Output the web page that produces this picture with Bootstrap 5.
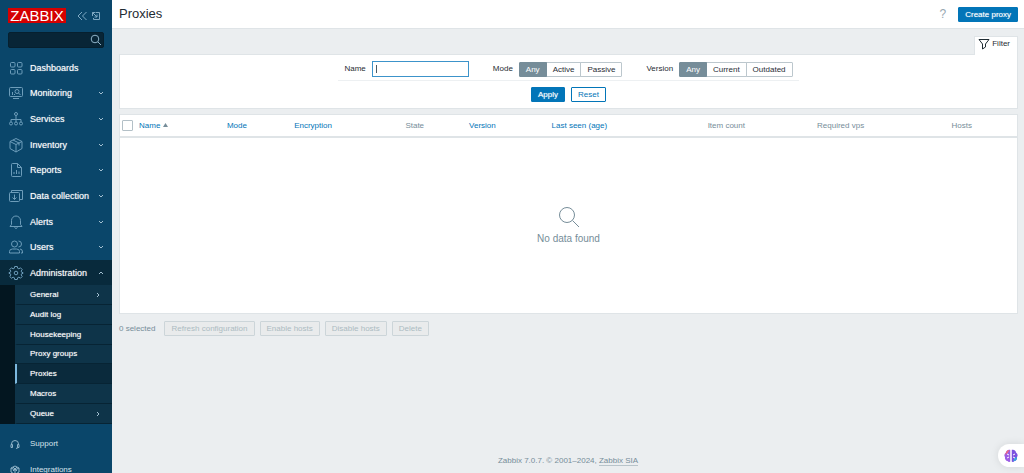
<!DOCTYPE html>
<html lang="en">
<head>
<meta charset="utf-8">
<meta name="viewport" content="width=device-width, initial-scale=1">
<title>Proxies</title>
<link href="https://cdn.jsdelivr.net/npm/bootstrap@5.3.0/dist/css/bootstrap.min.css" rel="stylesheet">
<style>
:root { --side: #0a466a; --blue: #0275b8; --ink: #1f2c33; --grey: #768d99; --line: #dfe4e7; }
body { font: 8px/12px "Liberation Sans", Arial, sans-serif; color: var(--ink); background: #ebeef0; }
svg { fill: none; stroke: currentColor; flex: none; }
a { text-decoration: none; color: inherit; }

.sidebar { width: 112px; background: var(--side); color: #7fa9c3; top: 0; }
.brand { height: 31px; padding: 0 11px 0 8px; }
.logo { background: #d40000; color: #fff; font-size: 15px; line-height: 15px; width: 58px; }
.side-search { margin: 1px 8px 0; height: 16px; }
.side-search input { background: #082536; border: 1px solid #06202f; border-radius: 2px; color: #fff; font-size: 8px; padding: 0 20px 0 5px; }
.side-search button { right: 2px; top: 2px; color: #8fb3c8; }
.menu { display: grid; grid-template-rows: repeat(8, 1fr) auto; min-height: 369px; margin-top: 7px; }
.menu-link { padding: 0 8px; gap: 6px; color: #fff; font-size: 9px; }
.menu-link, .sub-link, .btn-main { text-shadow: 0 0 1px #ffffff99; }
.menu-link svg { color: #6d9dba; }
.menu-link .chev, .sub-link .chev { color: #a3c0d1; margin-left: auto; }
.menu .open { background: #031620; }
.open > .menu-link { background: #082a3c; min-height: 25px; }
.submenu { display: grid; grid-auto-rows: 1fr; min-height: 139px; margin-left: 15px; background: #0e3449; }
.sub-link { padding: 1px 11px 0 13px; color: #fff; border-left: 2px solid transparent; border-bottom: 1px solid #072434; }
.sub-link.active { border-left-color: #7cb8de; background: #0a2a3c; }
.support { padding: 7px 10px 0; }
.support a { height: 26px; gap: 10px; color: #d5e3eb; }
.support svg { color: #8fb3c8; }

.topbar { height: 29px; background: #fff; padding: 0 6px 0 7px; border-bottom: 1px solid var(--line); }
.topbar h1 { font-size: 13px; line-height: 16px; }
.help { font-size: 12px; color: #97a8b1; padding-right: 12px; }
.content-area { padding: 7px 6px 0 7px; }
.btn { --bs-btn-font-size: 8px; --bs-btn-line-height: 13px; --bs-btn-padding-y: 0; --bs-btn-padding-x: 6px; --bs-btn-border-radius: 1px; white-space: nowrap; }
.btn-main { --bs-btn-color: #fff; --bs-btn-bg: var(--blue); --bs-btn-border-color: var(--blue); --bs-btn-hover-color: #fff; --bs-btn-hover-bg: #02659f; }
.btn-line { --bs-btn-color: var(--blue); --bs-btn-bg: #fff; --bs-btn-border-color: var(--blue); --bs-btn-hover-color: #fff; --bs-btn-hover-bg: var(--blue); }
.btn-mass { --bs-btn-disabled-color: #acbbc2; --bs-btn-disabled-bg: #e9ebec; --bs-btn-disabled-border-color: #ccd5d9; --bs-btn-disabled-opacity: 1; }
.btn-seg { --bs-btn-color: var(--ink); --bs-btn-bg: #fff; --bs-btn-border-color: #bcc7cd; --bs-btn-active-color: #fff; --bs-btn-active-bg: var(--grey); --bs-btn-active-border-color: var(--grey); }
.panel { background: #fff; border: 1px solid var(--line); }
.filter-tab { background: #fff; border: 1px solid var(--line); border-bottom: 0; height: 19px; padding: 0 7px 4px 3px; gap: 2px; margin-bottom: -1px; position: relative; }
.filter-box { padding: 6px 0; gap: 6px; }
.filter-fields { padding: 0 6px 3px; gap: 24px; border-bottom: 1px solid #edf0f2; }
.filter-group { gap: 6px; }
.filter-name { width: 97px; height: 16px; border: 1px solid #3c93ca; border-radius: 0; font-size: 8px; padding: 0 4px; background: linear-gradient(#4a5a63, #4a5a63) 3px 3px / 1px 8px no-repeat #fff; }
.table-panel { margin-top: 5px; }
.data-table { table-layout: fixed; color: var(--grey); }
.data-table th { font-weight: 400; height: 22px; padding: 0 4px; border-bottom: 2px solid var(--line); vertical-align: middle; }
.data-table th a { color: var(--blue); }
.data-table .form-check-input { width: 11px; height: 11px; border-radius: 1px; border-color: #b3c0c7; margin: 0; display: block; }
.data-table th:first-child { padding: 0 2px; }
.empty-cell { height: 176px; font-size: 10px; line-height: 14px; }
.mass { padding: 7px 0; gap: 5px; color: var(--grey); }
.foot { color: var(--grey); padding-bottom: 6px; }
.foot a { border-bottom: 1px solid #b8c4ca; }
.helper { position: fixed; right: 0; bottom: 6px; width: 26px; height: 23px; background: #fff; border: 0; border-radius: 12px 0 0 12px; padding: 0 0 0 6px; box-shadow: 0 0 8px #0000001a; }
.helper svg { stroke: none; }
</style>
</head>
<body>
<svg class="d-none" aria-hidden="true">
  <symbol id="down" viewBox="0 0 6 6"><path d="M1 2l2 2 2-2"/></symbol>
  <symbol id="up" viewBox="0 0 6 6"><path d="M1 4l2-2 2 2"/></symbol>
  <symbol id="right" viewBox="0 0 6 6"><path d="M2 1l2 2-2 2"/></symbol>
  <symbol id="cube" viewBox="0 0 16 16"><path d="M8 1.500l6 3v7l-6 3.500-6-3.500v-7zM2 4.500l6 3 6-3M8 7.500V15M5 3l6 3v2.500"/></symbol>
</svg>
<div class="d-flex min-vh-100">
  <nav class="sidebar vh-100 position-sticky overflow-hidden flex-shrink-0" aria-label="Main">
    <div class="brand d-flex align-items-center">
      <a href="#" class="logo text-center">ZABBIX</a>
      <a href="#" class="ms-auto d-flex" aria-label="Collapse"><svg width="10" height="10" viewBox="0 0 10 10"><path d="M5 1L1 5l4 4M9.500 1l-4 4 4 4"/></svg></a>
      <a href="#" class="d-flex ms-1" aria-label="Hide"><svg width="10" height="10" viewBox="0 0 10 10"><path d="M4.500 1.500h4v7h-6V7M1.500 5V1.500H4M1.500 1.500l4.500 4.500M6 3.500V6H3.500"/></svg></a>
    </div>
    <form class="side-search position-relative">
      <input type="search" class="w-100 h-100 d-block" aria-label="Search">
      <button type="button" class="position-absolute border-0 bg-transparent p-0 d-flex" aria-label="Search"><svg width="12" height="12" viewBox="0 0 12 12"><circle cx="5" cy="5" r="3.800"/><path d="M8 8l3 3"/></svg></button>
    </form>
    <ul class="menu list-unstyled mb-0">
      <li class="d-flex"><a href="#" class="menu-link d-flex align-items-center w-100"><svg width="16" height="16" viewBox="0 0 16 16"><rect x="2.500" y="2.500" width="4.500" height="4.500" rx="1"/><rect x="9.500" y="2.500" width="4.500" height="4.500" rx="1"/><rect x="2.500" y="9.500" width="4.500" height="4.500" rx="1"/><rect x="9.500" y="9.500" width="4.500" height="4.500" rx="1"/></svg>Dashboards</a></li>
      <li class="d-flex"><a href="#" class="menu-link d-flex align-items-center w-100"><svg width="16" height="16" viewBox="0 0 16 16"><rect x="1.500" y="2.500" width="13" height="9" rx="1"/><circle cx="9" cy="6.500" r="2"/><path d="M10.500 8l2 2M4.500 7v3M6.500 9v1M5 13.500h6"/></svg>Monitoring<svg class="chev" width="6" height="6"><use href="#down"/></svg></a></li>
      <li class="d-flex"><a href="#" class="menu-link d-flex align-items-center w-100"><svg width="16" height="16" viewBox="0 0 16 16"><circle cx="8" cy="3" r="1.500"/><circle cx="3" cy="12.500" r="1.500"/><circle cx="8" cy="12.500" r="1.500"/><circle cx="13" cy="12.500" r="1.500"/><path d="M8 4.500V11M3 11V8.500h10V11"/></svg>Services<svg class="chev" width="6" height="6"><use href="#down"/></svg></a></li>
      <li class="d-flex"><a href="#" class="menu-link d-flex align-items-center w-100"><svg width="16" height="16"><use href="#cube"/></svg>Inventory<svg class="chev" width="6" height="6"><use href="#down"/></svg></a></li>
      <li class="d-flex"><a href="#" class="menu-link d-flex align-items-center w-100"><svg width="16" height="16" viewBox="0 0 16 16"><path d="M4.500 1.500h5l4 4v8q0 1-1 1h-8q-1 0-1-1v-11q0-1 1-1zM9.500 1.500v4h4M6 12v-2M8.500 12V8M11 12V9.500"/></svg>Reports<svg class="chev" width="6" height="6"><use href="#down"/></svg></a></li>
      <li class="d-flex"><a href="#" class="menu-link d-flex align-items-center w-100"><svg width="16" height="16" viewBox="0 0 16 16"><rect x="1.500" y="4.500" width="10" height="9" rx="1"/><path d="M3.500 4V2.500h11v9H12M6.500 6.500v5M4.500 9.500l2 2 2-2"/></svg>Data collection<svg class="chev" width="6" height="6"><use href="#down"/></svg></a></li>
      <li class="d-flex"><a href="#" class="menu-link d-flex align-items-center w-100"><svg width="16" height="16" viewBox="0 0 16 16"><path d="M2 12.500h12l-1.500-2V6.500a4.500 4.500 0 0 0-9 0v4zM6.500 13.500q1.500 2 3 0"/></svg>Alerts<svg class="chev" width="6" height="6"><use href="#down"/></svg></a></li>
      <li class="d-flex"><a href="#" class="menu-link d-flex align-items-center w-100"><svg width="16" height="16" viewBox="0 0 16 16"><circle cx="6.500" cy="5" r="3"/><path d="M1.500 14v-1.500q0-2.500 3-2.500h4q3 0 3 2.500V14zM10.500 2a3 3 0 0 1 0 6M12 10q2.500 0 2.500 3v1H13"/></svg>Users<svg class="chev" width="6" height="6"><use href="#down"/></svg></a></li>
      <li class="open"><a href="#" class="menu-link d-flex align-items-center w-100"><svg width="16" height="16" viewBox="0 0 16 16"><path d="M6.700 1.500h2.600l.4 1.800 1.200.5 1.600-1 1.700 1.700-1 1.600.5 1.200 1.300.3v.8l-1.300.3-.5 1.200 1 1.600-1.700 1.700-1.600-1-1.200.5-.4 1.800H6.700l-.4-1.800-1.200-.5-1.600 1-1.700-1.700 1-1.600-.5-1.200L1 8.400v-.8l1.300-.3.5-1.200-1-1.600 1.700-1.700 1.600 1 1.200-.5z"/><circle cx="8" cy="8" r="1.800"/></svg>Administration<svg class="chev" width="6" height="6"><use href="#up"/></svg></a>
        <ul class="submenu list-unstyled">
          <li class="d-flex"><a href="#" class="sub-link d-flex align-items-center w-100">General<svg class="chev" width="6" height="6"><use href="#right"/></svg></a></li>
          <li class="d-flex"><a href="#" class="sub-link d-flex align-items-center w-100">Audit log</a></li>
          <li class="d-flex"><a href="#" class="sub-link d-flex align-items-center w-100">Housekeeping</a></li>
          <li class="d-flex"><a href="#" class="sub-link d-flex align-items-center w-100">Proxy groups</a></li>
          <li class="d-flex"><a href="#" class="sub-link active d-flex align-items-center w-100" aria-current="page">Proxies</a></li>
          <li class="d-flex"><a href="#" class="sub-link d-flex align-items-center w-100">Macros</a></li>
          <li class="d-flex"><a href="#" class="sub-link d-flex align-items-center w-100">Queue<svg class="chev" width="6" height="6"><use href="#right"/></svg></a></li>
        </ul>
      </li>
    </ul>
    <div class="support">
      <a href="#" class="d-flex align-items-center"><svg width="10" height="10" viewBox="0 0 10 10"><path d="M1.500 6V5a3.500 3.500 0 0 1 7 0v1M1 5.500h1.500v3H1zM7.500 5.500H9v3H7.500zM8.500 8.500L6 9.500"/></svg>Support</a>
      <a href="#" class="d-flex align-items-center"><svg width="10" height="10" viewBox="0 0 10 10"><path d="M5 1l4 2v4L5 9.500 1 7V3zM1 3l4 2 4-2M5 5v4.500M3 2l4 4M7 2L3 6"/></svg>Integrations</a>
    </div>
  </nav>

  <div class="d-flex flex-column flex-grow-1">
    <header class="topbar d-flex align-items-center">
      <h1 class="fw-normal mb-0 me-auto">Proxies</h1>
      <a href="#" class="help">?</a>
      <button type="button" class="btn btn-main">Create proxy</button>
    </header>
    <main class="content-area">
      <div class="d-flex justify-content-end"><a href="#" class="filter-tab d-flex align-items-center"><svg width="12" height="12" viewBox="0 0 12 12"><path d="M1 1.500h10L7.500 6v3l-3 2V6z"/></svg>Filter</a></div>
      <form class="panel filter-box d-flex flex-column align-items-center">
        <div class="filter-fields d-flex align-items-center">
          <div class="filter-group d-flex align-items-center"><label for="name">Name</label><input id="name" type="text" class="filter-name"></div>
          <div class="filter-group d-flex align-items-center" role="group" aria-label="Mode"><span>Mode</span>
            <div class="btn-group">
              <input type="radio" class="btn-check" name="mode" id="m0" checked><label class="btn btn-seg" for="m0">Any</label>
              <input type="radio" class="btn-check" name="mode" id="m1"><label class="btn btn-seg" for="m1">Active</label>
              <input type="radio" class="btn-check" name="mode" id="m2"><label class="btn btn-seg" for="m2">Passive</label>
            </div></div>
          <div class="filter-group d-flex align-items-center" role="group" aria-label="Version"><span>Version</span>
            <div class="btn-group">
              <input type="radio" class="btn-check" name="ver" id="v0" checked><label class="btn btn-seg" for="v0">Any</label>
              <input type="radio" class="btn-check" name="ver" id="v1"><label class="btn btn-seg" for="v1">Current</label>
              <input type="radio" class="btn-check" name="ver" id="v2"><label class="btn btn-seg" for="v2">Outdated</label>
            </div></div>
        </div>
        <div class="filter-group d-flex"><button type="button" class="btn btn-main">Apply</button><button type="reset" class="btn btn-line">Reset</button></div>
      </form>
      <div class="panel table-panel">
        <table class="data-table w-100">
          <colgroup><col style="width:15px"><col style="width:9.8%"><col style="width:7.5%"><col style="width:12.4%"><col style="width:7.1%"><col style="width:9.2%"><col style="width:17.4%"><col style="width:12.2%"><col style="width:15%"><col></colgroup>
          <thead><tr>
            <th><input type="checkbox" class="form-check-input" aria-label="Select all"></th>
            <th><a href="#">Name</a> <svg width="5" height="4" viewBox="0 0 5 4"><path d="M0 4L2.500 0 5 4z" fill="#768d99" stroke="none"/></svg></th>
            <th><a href="#">Mode</a></th><th><a href="#">Encryption</a></th><th>State</th><th><a href="#">Version</a></th><th><a href="#">Last seen (age)</a></th><th>Item count</th><th>Required vps</th><th>Hosts</th>
          </tr></thead>
          <tbody><tr><td colspan="10" class="empty-cell text-center align-middle"><svg class="d-block mx-auto mb-1" width="22" height="22" viewBox="0 0 22 22"><circle cx="9" cy="9" r="7.500"/><path d="M14.500 14.500l6.500 6.500"/></svg>No data found</td></tr></tbody>
        </table>
      </div>
      <div class="mass d-flex align-items-center">
        <span class="me-1">0 selected</span>
        <button type="button" class="btn btn-mass" disabled>Refresh configuration</button>
        <button type="button" class="btn btn-mass" disabled>Enable hosts</button>
        <button type="button" class="btn btn-mass" disabled>Disable hosts</button>
        <button type="button" class="btn btn-mass" disabled>Delete</button>
      </div>
    </main>
    <footer class="foot mt-auto text-center">Zabbix 7.0.7. © 2001–2024, <a href="#">Zabbix SIA</a></footer>
  </div>
</div>
<button type="button" class="helper d-flex align-items-center" aria-label="Assistant"><svg width="14" height="14" viewBox="0 0 14 14"><path d="M6.500 1C4 0 2 2 2 3.500 0 5 0 7 1 8c-.5 2 1 4 2.500 4 1 1.500 2.500 1 3 .5z" fill="#9b5de5"/><path d="M7.500 1C10 0 12 2 12 3.500c2 1.500 2 3.500 1 4.500.5 2-1 4-2.500 4-1 1.500-2.500 1-3 .5z" fill="#7b52e0"/><path d="M2 3.500Q3 .5 5.500 1L3.500 4 1 6z" fill="#f0697e"/><path d="M13 8q0 4-3 4l-1 .5L10.500 9z" fill="#35a8dc"/><path d="M7 1v12M3 5l2 1M3 9l2-1M11 5L9 6M11 9L9 8" stroke="#fff"/></svg></button>
<script src="https://cdn.jsdelivr.net/npm/bootstrap@5.3.0/dist/js/bootstrap.bundle.min.js"></script>
</body>
</html>
